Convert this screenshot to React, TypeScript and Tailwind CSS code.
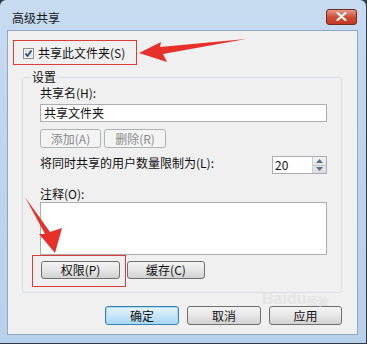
import React from 'react';

const font = { fontFamily: '"Noto Sans CJK SC", "Liberation Sans", sans-serif' };

const Btn: React.FC<{ label: string; w: string; def?: boolean; disabled?: boolean; h?: string }> = ({ label, w, def, disabled, h = 'h-[19px]' }) => {
  let cls = 'border-[#707070] bg-gradient-to-b from-[#f4f4f4] via-[#e6e6e6] to-[#d2d2d2] text-[#111]';
  if (def) cls = 'border-[#3c7fb1] bg-gradient-to-b from-[#e8f5fc] via-[#c7e6f8] to-[#a9d6f2] text-[#111] shadow-[inset_0_0_0_1px_#a7dcf7]';
  if (disabled) cls = 'border-[#adb2b5] bg-[#f4f4f4] text-[#8a8a8a]';
  return (
    <div className={`${w} ${h} ${cls} flex items-center justify-center rounded-[3px] border text-[12px] leading-none`}>
      {label}
    </div>
  );
};

export default function App() {
  return (
    <div style={font} className="relative h-[344px] w-[367px] overflow-hidden bg-[#2f3b48] text-[12px] text-[#111]">
      <div className="flex h-[343px] w-[366px] flex-col rounded-t-[6px] bg-gradient-to-b from-[#c7dbf1] via-[#bed4ec] to-[#b9d0ea]">
        {/* title bar */}
        <div className="flex h-[30px] items-center justify-between pl-[12px] pr-[9px] pt-[5px]">
          <span className="text-[12px] text-[#1a1a1a]">高级共享</span>
          <div className="-mt-[2px] flex h-[16px] w-[31px] items-center justify-center rounded-[3px] border border-[#6d2b22] bg-gradient-to-b from-[#e69a8a] via-[#cf4d36] to-[#c23a22]">
            <svg width="11" height="9" viewBox="0 0 11 9">
              <path d="M1.5 1 L9.5 8 M9.5 1 L1.5 8" stroke="#fff" strokeWidth="2.2" strokeLinecap="round" />
            </svg>
          </div>
        </div>

        {/* client area */}
        <div className="ml-[7px] flex h-[305px] w-[351px] flex-col border border-[#8ea7c1] bg-[#f0f0f0]">
          <div className="mt-[14px] flex h-[16px] items-center gap-[4px] pl-[15px]">
            <svg width="11" height="11" viewBox="0 0 11 11">
              <rect x="0.5" y="0.5" width="10" height="10" fill="#f4f4f4" stroke="#8f8f8f" />
              <rect x="2" y="2" width="7" height="7" fill="#dde4ea" />
              <path d="M2.5 5.5 L4.5 8 L8.5 2.5" fill="none" stroke="#2a3f6a" strokeWidth="1.6" />
            </svg>
            <span>共享此文件夹(S)</span>
          </div>

          <fieldset className="ml-[14px] mt-[9px] h-[223px] w-[320px] rounded-[3px] border border-[#d5dfe5] pl-[17px]">
            <legend className="ml-[-9px] px-[1px] leading-[14px]">设置</legend>
            <div className="mt-[2px] leading-[14px]">共享名(H):</div>
            <div className="mt-[4px] flex h-[18px] w-[287px] items-center border border-[#abadb3] bg-white pl-[3px] leading-none">
              共享文件夹
            </div>
            <div className="mt-[7px] flex gap-[3px]">
              <Btn label="添加(A)" w="w-[61px]" disabled />
              <Btn label="删除(R)" w="w-[62px]" disabled />
            </div>
            <div className="mt-[8px] flex w-[287px] items-center justify-between">
              <span className="-mt-[5px] leading-[14px]">将同时共享的用户数量限制为(L):</span>
              <div className="flex h-[18px] w-[55px] border border-[#abadb3] bg-white">
                <span className="flex flex-1 items-center pl-[2px] leading-none">20</span>
                <div className="flex w-[14px] flex-col border-l border-[#d0d0d0] bg-gradient-to-b from-[#f2f2f2] to-[#dcdcdc]">
                  <div className="flex flex-1 items-center justify-center border-b border-[#c4c4c4]">
                    <svg width="7" height="4" viewBox="0 0 7 4"><path d="M0 4 L3.5 0 L7 4Z" fill="#5a6e86" /></svg>
                  </div>
                  <div className="flex flex-1 items-center justify-center">
                    <svg width="7" height="4" viewBox="0 0 7 4"><path d="M0 0 L3.5 4 L7 0Z" fill="#5a6e86" /></svg>
                  </div>
                </div>
              </div>
            </div>
            <div className="mt-[13px] leading-[14px]">注释(O):</div>
            <div className="mt-[1px] h-[53px] w-[287px] border border-[#abadb3] bg-white" />
            <div className="mt-[6px] flex gap-[7px] pl-[1px]">
              <Btn label="权限(P)" w="w-[79px]" h="h-[18px]" />
              <Btn label="缓存(C)" w="w-[78px]" h="h-[18px]" />
            </div>
          </fieldset>

          <div className="mt-[13px] flex justify-end gap-[8px] pr-[15px]">
            <Btn label="确定" w="w-[74px]" def />
            <Btn label="取消" w="w-[74px]" />
            <Btn label="应用" w="w-[73px]" />
          </div>
        </div>
      </div>

      {/* annotations */}
      <div className="absolute left-[13px] top-[40px] h-[25px] w-[124px] border border-[#dc3b3b]" />
      <div className="absolute left-[32px] top-[255px] h-[32px] w-[94px] border border-[#dc3b3b]" />
      <svg className="absolute left-0 top-0" width="367" height="344" viewBox="0 0 367 344">
        <polygon points="139,53 161,42 160,47 246,39 163,54 167,62" fill="#e8302b" />
        <polygon points="55,253 39,234 45,234 25,197 50,232 62,228" fill="#e8302b" />
      </svg>
      <div className="absolute left-[262px] top-[291px] flex items-end text-[16px] font-bold leading-none text-[#e2e2e2] opacity-80" style={{ fontFamily: '"Liberation Sans", sans-serif' }}>
        Baidu<span className="ml-[1px] text-[11px]">经验</span>
      </div>
    </div>
  );
}
